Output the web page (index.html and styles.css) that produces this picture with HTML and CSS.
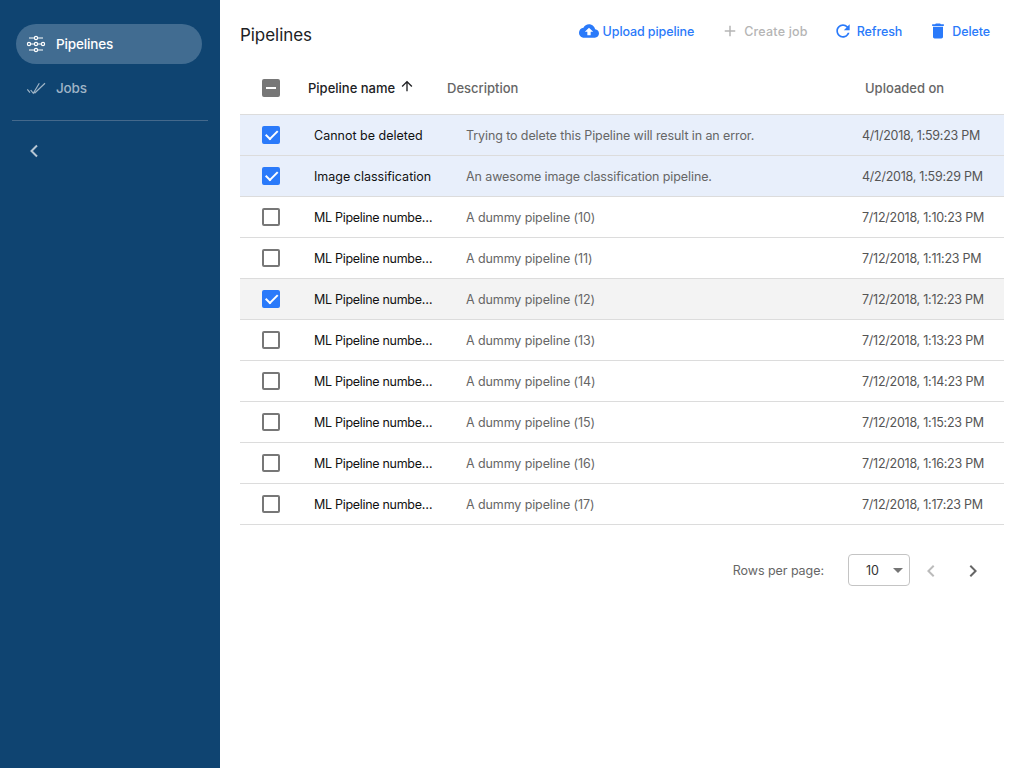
FILE: index.html
```html
<!DOCTYPE html>
<html lang="en">
<head>
<meta charset="utf-8">
<title>Pipelines</title>
<link rel="stylesheet" href="styles.css">
</head>
<body>
<div class="app">
  <nav class="side">
    <div class="nav-list">
      <a class="nav-item active">
        <svg class="nav-icon" width="20" height="18" viewBox="0 0 20 18" fill="none" stroke="currentColor" stroke-width="1.2">
          <path d="M3 3H8.400M11.600 3H17M1 9H1.400M4.600 9H8.400M11.600 9H15.400M18.600 9H19M3 15H8.400M11.600 15H17"/>
          <circle cx="10" cy="3" r="1.600"/><circle cx="3" cy="9" r="1.600"/><circle cx="10" cy="9" r="1.600"/><circle cx="17" cy="9" r="1.600"/><circle cx="10" cy="15" r="1.600"/>
        </svg>
        <span>Pipelines</span>
      </a>
      <a class="nav-item">
        <svg class="nav-icon" width="20" height="14" viewBox="0 0 20 14" fill="none" stroke="currentColor" stroke-width="1.2">
          <path d="M1.300 8.300L4 11.700M4.700 9L7.300 12.300L13.300 2.300M8.500 12.300L19 2.300"/>
        </svg>
        <span>Jobs</span>
      </a>
    </div>
    <div class="side-rule"></div>
    <div class="collapse">
      <svg width="10" height="14" viewBox="0 0 10 14" fill="none" stroke="currentColor" stroke-width="2"><path d="M8 1.500L2.500 7L8 12.500"/></svg>
    </div>
  </nav>
  <main class="main">
    <header class="toolbar">
      <h1 class="title">Pipelines</h1>
      <div class="actions">
        <button class="btn"><svg width="20" height="20" viewBox="0 0 24 24" fill="currentColor"><path d="M19.350 10.040C18.670 6.590 15.640 4 12 4 9.110 4 6.600 5.640 5.350 8.040 2.340 8.360 0 10.910 0 14c0 3.310 2.690 6 6 6h13c2.760 0 5-2.240 5-5 0-2.640-2.050-4.780-4.650-4.960zM14 13v4h-4v-4H7l5-5 5 5h-3z"/></svg>Upload pipeline</button>
        <button class="btn off"><svg width="18" height="18" viewBox="0 0 24 24" fill="currentColor"><path d="M19 13h-6v6h-2v-6H5v-2h6V5h2v6h6v2z"/></svg>Create job</button>
        <button class="btn"><svg width="20" height="20" viewBox="0 0 24 24" fill="currentColor"><path d="M17.650 6.350C16.200 4.900 14.210 4 12 4c-4.420 0-7.990 3.580-7.990 8s3.570 8 7.990 8c3.730 0 6.840-2.550 7.730-6h-2.080c-.82 2.330-3.040 4-5.650 4-3.310 0-6-2.690-6-6s2.690-6 6-6c1.660 0 3.140.69 4.220 1.780L13 11h7V4l-2.350 2.350z"/></svg>Refresh</button>
        <button class="btn"><svg width="20" height="20" viewBox="0 0 24 24" fill="currentColor"><path d="M6 19c0 1.100.9 2 2 2h8c1.100 0 2-.9 2-2V7H6v12zM19 4h-3.500l-1-1h-5l-1 1H5v2h14V4z"/></svg>Delete</button>
      </div>
    </header>
    <section class="table">
      <div class="head">
        <span class="cb ind"></span>
        <span class="h-name">Pipeline name<svg width="16" height="16" viewBox="0 0 24 24" fill="currentColor"><path d="M4 12l1.410 1.410L11 7.830V20h2V7.830l5.580 5.590L20 12l-8-8-8 8z"/></svg></span>
        <span class="h-desc">Description</span>
        <span class="h-date">Uploaded on</span>
      </div>
      <div class="row sel"><span class="cb on"></span><span class="name">Cannot be deleted</span><span class="desc">Trying to delete this Pipeline will result in an error.</span><span class="date">4/1/2018, 1:59:23 PM</span></div>
      <div class="row sel"><span class="cb on"></span><span class="name">Image classification</span><span class="desc">An awesome image classification pipeline.</span><span class="date">4/2/2018, 1:59:29 PM</span></div>
      <div class="row"><span class="cb"></span><span class="name tight">ML Pipeline number 10</span><span class="desc">A dummy pipeline (10)</span><span class="date">7/12/2018, 1:10:23 PM</span></div>
      <div class="row"><span class="cb"></span><span class="name tight">ML Pipeline number 11</span><span class="desc">A dummy pipeline (11)</span><span class="date">7/12/2018, 1:11:23 PM</span></div>
      <div class="row hov"><span class="cb on"></span><span class="name tight">ML Pipeline number 12</span><span class="desc">A dummy pipeline (12)</span><span class="date">7/12/2018, 1:12:23 PM</span></div>
      <div class="row"><span class="cb"></span><span class="name tight">ML Pipeline number 13</span><span class="desc">A dummy pipeline (13)</span><span class="date">7/12/2018, 1:13:23 PM</span></div>
      <div class="row"><span class="cb"></span><span class="name tight">ML Pipeline number 14</span><span class="desc">A dummy pipeline (14)</span><span class="date">7/12/2018, 1:14:23 PM</span></div>
      <div class="row"><span class="cb"></span><span class="name tight">ML Pipeline number 15</span><span class="desc">A dummy pipeline (15)</span><span class="date">7/12/2018, 1:15:23 PM</span></div>
      <div class="row"><span class="cb"></span><span class="name tight">ML Pipeline number 16</span><span class="desc">A dummy pipeline (16)</span><span class="date">7/12/2018, 1:16:23 PM</span></div>
      <div class="row"><span class="cb"></span><span class="name tight">ML Pipeline number 17</span><span class="desc">A dummy pipeline (17)</span><span class="date">7/12/2018, 1:17:23 PM</span></div>
    </section>
    <footer class="pager">
      <span class="rpp">Rows per page:</span>
      <div class="select"><span>10</span><i class="caret"></i></div>
      <svg class="pg off" width="24" height="24" viewBox="0 0 24 24" fill="currentColor"><path d="M15.410 7.410L14 6l-6 6 6 6 1.410-1.410L10.830 12z"/></svg>
      <svg class="pg" width="24" height="24" viewBox="0 0 24 24" fill="currentColor"><path d="M10 6L8.590 7.410 13.170 12l-4.580 4.590L10 18l6-6z"/></svg>
    </footer>
  </main>
</div>
</body>
</html>
```
FILE: styles.css
```css
* { box-sizing: border-box; }
html, body { margin: 0; height: 100%; }
body { font-family: "Inter", "Liberation Sans", sans-serif; font-size: 12.500px; letter-spacing: -0.1px; color: #000; background: #fff; overflow: hidden; }
.app { display: flex; height: 768px; }

.side { width: 220px; flex: none; background: #0f4471; padding: 24px 12px 0; }
.nav-list { display: flex; flex-direction: column; gap: 4px; padding: 0 6px 0 4px; }
.nav-item { display: flex; align-items: center; height: 40px; padding-left: 10px; gap: 10px; border-radius: 20px; color: #9fb4c6; font-size: 13.500px; font-weight: 500; letter-spacing: -0.15px; }
.nav-item span { margin-top: -1px; }
.nav-item.active { background: #416c91; color: #fff; }
.nav-icon { flex: none; }
.side-rule { height: 1px; background: #44698c; margin-top: 12px; }
.collapse { color: #b7c7d4; padding: 23px 0 0 17px; display: flex; }

.main { flex: 1; padding: 0 20px; min-width: 0; }
.toolbar { display: flex; justify-content: space-between; align-items: center; height: 68px; }
.title { margin: 2px 0 0; font-size: 17px; font-weight: 400; letter-spacing: -0.05px; color: #202124; }
.actions { display: flex; align-items: center; gap: 26px; margin-right: 14px; margin-top: -6px; }
.btn { display: flex; align-items: center; gap: 4px; border: 0; background: none; padding: 0; font: 500 12.500px "Inter", "Liberation Sans", sans-serif; color: #2a7afa; letter-spacing: -0.1px; }
.btn.off { color: #b5b5b5; gap: 5px; margin-left: 1px; letter-spacing: 0.2px; }
.btn.off + .btn { margin-left: -1px; }

.head { display: flex; align-items: center; height: 47px; border-bottom: 1px solid #dcdcdc; padding: 0 0 6px 22px; font-size: 13px; font-weight: 500; letter-spacing: 0; color: #666; }
.h-name { display: flex; align-items: center; gap: 4px; width: 139px; margin-left: 28px; color: #202124; }
.h-name svg { margin-top: -5px; }
.h-desc { width: 418px; }
.row { display: flex; align-items: center; height: 41px; border-bottom: 1px solid #dcdcdc; padding-left: 22px; }
.row.sel { background: #e8effb; }
.row.hov { background: #f3f3f3; }
.name { width: 119px; margin-left: 34px; margin-right: 33px; white-space: nowrap; overflow: hidden; text-overflow: ellipsis; color: #111; letter-spacing: 0; }
.name.tight { letter-spacing: -0.3px; }
.desc { width: 396px; color: #666; }
.date { color: #555; letter-spacing: -0.25px; }

.cb { width: 18px; height: 18px; flex: none; border: 2px solid #777; border-radius: 2px; position: relative; background: #fff; }
.cb.on { background: #2a7afa; border-color: #2a7afa; }
.cb.on::after { content: ""; position: absolute; left: 1px; top: 0px; width: 10px; height: 5px; border-left: 2px solid #fff; border-bottom: 2px solid #fff; transform: rotate(-45deg) translate(-1px, 2px); }
.cb.ind { background: #777; }
.cb.ind::after { content: ""; position: absolute; left: 2px; top: 6px; width: 10px; height: 2px; background: #fff; }

.pager { display: flex; align-items: center; justify-content: flex-end; height: 62px; margin-top: 14px; padding-right: 19px; }
.rpp { color: #666; margin-right: 24px; letter-spacing: -0.05px; }
.select { display: flex; align-items: center; justify-content: space-between; width: 62px; height: 32px; border: 1px solid #c4c4c4; border-radius: 4px; padding: 0 6px 0 17px; color: #333; }
.caret { width: 0; height: 0; border-left: 5px solid transparent; border-right: 5px solid transparent; border-top: 5px solid #757575; }
.pg { color: #666; margin: 1px 0 0 18px; }
.pg.off { color: #bbb; margin-left: 9px; }
```
